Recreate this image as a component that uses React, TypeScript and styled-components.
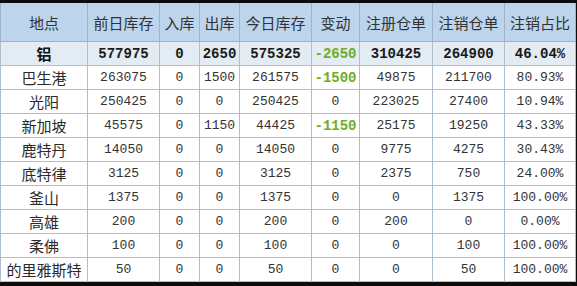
import React, { FC } from 'react';
import styled, { createGlobalStyle } from 'styled-components';

const GlobalStyle = createGlobalStyle`
	html, body {
		margin: 0;
		padding: 0;
		background: #0c0c0c;
	}
	body {
		width: 577px;
		height: 286px;
		overflow: hidden;
	}
`;

type RowData = {
	place: string;
	values: string[];
	change: string;
};

const total: RowData = {
	place: '铝',
	values: ['577975', '0', '2650', '575325', '310425', '264900', '46.04%'],
	change: '-2650',
};

const rows: RowData[] = [
	{ place: '巴生港', values: ['263075', '0', '1500', '261575', '49875', '211700', '80.93%'], change: '-1500' },
	{ place: '光阳', values: ['250425', '0', '0', '250425', '223025', '27400', '10.94%'], change: '0' },
	{ place: '新加坡', values: ['45575', '0', '1150', '44425', '25175', '19250', '43.33%'], change: '-1150' },
	{ place: '鹿特丹', values: ['14050', '0', '0', '14050', '9775', '4275', '30.43%'], change: '0' },
	{ place: '底特律', values: ['3125', '0', '0', '3125', '2375', '750', '24.00%'], change: '0' },
	{ place: '釜山', values: ['1375', '0', '0', '1375', '0', '1375', '100.00%'], change: '0' },
	{ place: '高雄', values: ['200', '0', '0', '200', '200', '0', '0.00%'], change: '0' },
	{ place: '柔佛', values: ['100', '0', '0', '100', '0', '100', '100.00%'], change: '0' },
	{ place: '的里雅斯特', values: ['50', '0', '0', '50', '0', '50', '100.00%'], change: '0' },
];

const headers = ['地点', '前日库存', '入库', '出库', '今日库存', '变动', '注册仓单', '注销仓单', '注销占比'];
const widths = [87, 72, 40, 40, 72, 48, 73, 72, 71];

const StockTable: FC = () => {
	const renderRow = (r: RowData, isTotal: boolean) => (
		<Row key={r.place} $total={isTotal}>
			<PlaceCell $bold={isTotal}>{r.place}</PlaceCell>
			{r.values.slice(0, 4).map((v, i) => (
				<NumCell key={i} $bold={isTotal}>{v}</NumCell>
			))}
			<NumCell $bold={isTotal || r.change !== '0'} $green={r.change !== '0'}>
				{r.change}
			</NumCell>
			{r.values.slice(4).map((v, i) => (
				<NumCell key={'b' + i} $bold={isTotal}>{v}</NumCell>
			))}
		</Row>
	);

	return (
		<Table>
			<colgroup>
				{widths.map((w, i) => (
					<col key={i} style={{ width: w }} />
				))}
			</colgroup>
			<thead>
				<tr>
					{headers.map((h) => (
						<HeadCell key={h}>{h}</HeadCell>
					))}
				</tr>
			</thead>
			<tbody>
				{renderRow(total, true)}
				{rows.map((r) => renderRow(r, false))}
			</tbody>
		</Table>
	);
};

export default function App() {
	return (
		<>
			<GlobalStyle />
			<Wrapper>
				<StockTable />
			</Wrapper>
		</>
	);
}

const Wrapper = styled.div`
	padding-top: 3px;
	width: 576px;
`;

const Table = styled.table`
	width: 576px;
	table-layout: fixed;
	border-collapse: collapse;
	background: #ffffff;
	border-right: 1px solid #6d7d8c;
`;

const HeadCell = styled.th`
	height: 38px;
	padding: 0;
	background: #bcd5ec;
	border: 1px solid #9fb4c8;
	border-top: none;
	font-family: 'Noto Sans CJK SC', sans-serif;
	font-size: 15px;
	font-weight: 400;
	color: #333333;
	text-align: center;
	white-space: nowrap;
`;

const Row = styled.tr<{ $total: boolean }>`
	background: ${(p) => (p.$total ? '#e3ebf3' : '#ffffff')};
`;

const Cell = styled.td`
	height: 23px;
	padding: 0;
	border: 1px solid #aebfcf;
	text-align: center;
	white-space: nowrap;
	color: #2a2a2a;
`;

const PlaceCell = styled(Cell)<{ $bold: boolean }>`
	font-family: 'Noto Sans CJK SC', sans-serif;
	font-size: 15px;
	font-weight: ${(p) => (p.$bold ? 700 : 400)};
	color: ${(p) => (p.$bold ? '#111111' : '#2a2a2a')};
`;

const NumCell = styled(Cell)<{ $bold: boolean; $green?: boolean }>`
	font-family: 'Liberation Mono', monospace;
	font-size: ${(p) => (p.$bold ? '14px' : '13px')};
	font-weight: ${(p) => (p.$bold ? 700 : 400)};
	color: ${(p) => (p.$green ? '#6fae22' : p.$bold ? '#1a1a1a' : '#333333')};
`;
